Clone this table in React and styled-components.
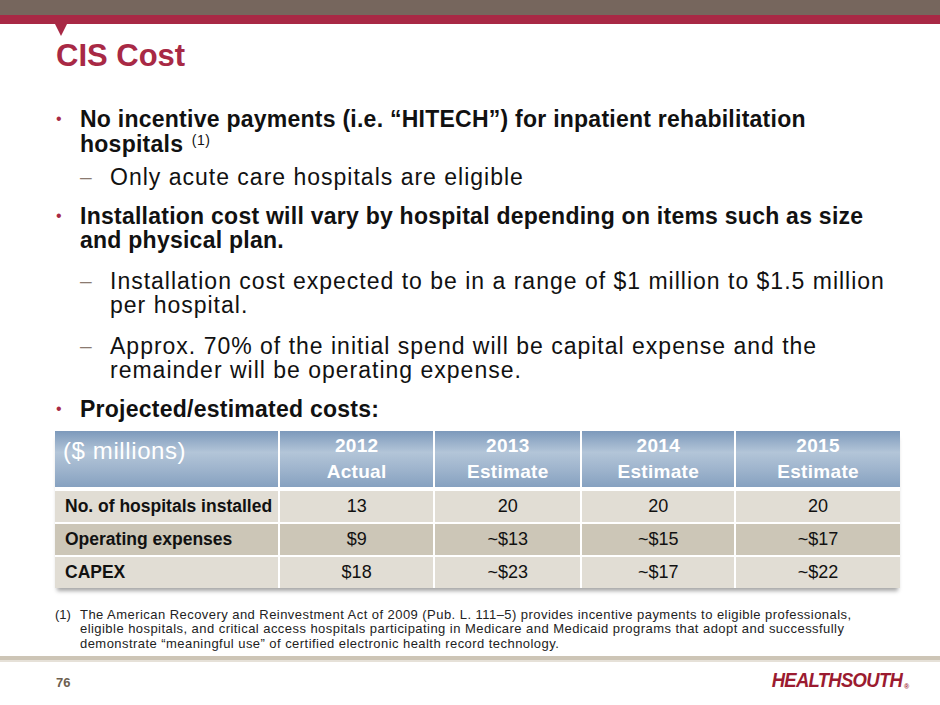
import React from 'react';
import styled, { createGlobalStyle } from 'styled-components';

const GlobalStyle = createGlobalStyle`
  html, body { margin: 0; padding: 0; background: #fff; }
  body { font-family: "Liberation Sans", Arial, sans-serif; }
`;

const Slide = styled.div`
  position: relative;
  width: 940px;
  height: 705px;
  display: flex;
  flex-direction: column;
  overflow: hidden;
  background: #fff;
`;

const TopBand = styled.div`
  height: 15px;
  flex-shrink: 0;
  background: #76665d;
`;

const RedBand = styled.div`
  position: relative;
  height: 9px;
  flex-shrink: 0;
  background: #a82945;

  /* little pointer under the band */
  &::after {
    content: '';
    position: absolute;
    left: 55px;
    top: 9px;
    border-left: 6px solid transparent;
    border-right: 6px solid transparent;
    border-top: 12px solid #a82945;
  }
`;

const Title = styled.h1`
  margin: 12px 0 0 56px;
  font-size: 31px;
  line-height: 40px;
  font-weight: bold;
  color: #a82945;
`;

const List = styled.div`
  margin-top: 31px;
  display: flex;
  flex-direction: column;
`;

const Item = styled.div`
  display: flex;
  margin-left: ${({ sub }) => (sub ? '80px' : '56px')};
  margin-top: ${({ gap }) => gap || 0}px;
  font-size: 23px;
  line-height: 24.5px;
  font-weight: ${({ sub }) => (sub ? 'normal' : 'bold')};
  letter-spacing: ${({ sub }) => (sub ? '1px' : '0.25px')};
  color: #111;
  white-space: nowrap;
`;

const Marker = styled.span`
  flex-shrink: 0;
  width: ${({ sub }) => (sub ? '30px' : '24px')};
  color: ${({ sub }) => (sub ? '#8a7a70' : '#a82945')};
  font-weight: normal;
  letter-spacing: 0;
  font-size: ${({ sub }) => (sub ? '21px' : '16px')};
`;

const Sup = styled.sup`
  margin-left: 2px;
  font-size: 14px;
  font-weight: normal;
  letter-spacing: 0.5px;
  vertical-align: 7px;
  line-height: 0;
`;

const Table = styled.table`
  margin: 10px 0 0 55px;
  width: 845px;
  border-collapse: collapse;
  box-shadow: 0 5px 4px -2px rgba(0, 0, 0, 0.35);
`;

const Head = styled.th`
  width: ${({ w }) => w}px;
  height: 56px;
  padding: 0 8px;
  border-right: 2px solid #fff;
  border-bottom: 4px solid #fff;
  background: linear-gradient(180deg, #7c99bb 0%, #b3c5d8 38%, #9db3cc 70%, #86a1c0 100%);
  color: #fff;
  text-align: ${({ left }) => (left ? 'left' : 'center')};
  vertical-align: ${({ left }) => (left ? 'top' : 'middle')};
  font-size: ${({ left }) => (left ? '24px' : '19px')};
  font-weight: ${({ left }) => (left ? 'normal' : 'bold')};
  letter-spacing: ${({ left }) => (left ? '0.6px' : '0.3px')};
  line-height: ${({ left }) => (left ? '40px' : '26px')};

  &:last-child { border-right: none; }
`;

const Cell = styled.td`
  height: 31px;
  padding: 0 0 0 ${({ label }) => (label ? '10px' : '0')};
  border-right: 2px solid #fff;
  border-bottom: 2px solid #fff;
  background: ${({ dark }) => (dark ? '#ccc6b7' : '#e1ddd4')};
  color: #111;
  text-align: ${({ label }) => (label ? 'left' : 'center')};
  font-size: ${({ label }) => (label ? '17.5px' : '18px')};
  font-weight: ${({ label }) => (label ? 'bold' : 'normal')};

  &:last-child { border-right: none; }
  tr:last-child > & { border-bottom: none; }
`;

const Footnote = styled.div`
  display: flex;
  margin: 20px 0 0 55px;
  font-size: 13px;
  line-height: 14.3px;
  letter-spacing: 0.45px;
  color: #222;
  white-space: nowrap;
`;

const NoteMark = styled.span`
  width: 25px;
  flex-shrink: 0;
  letter-spacing: 0;
`;

const Rule = styled.div`
  margin-top: 5px;
  height: 4px;
  flex-shrink: 0;
  background: #cdc5b6;
  border-bottom: 2px solid #e6e1d8;
`;

const Footer = styled.div`
  display: flex;
  align-items: flex-start;
  justify-content: space-between;
  padding: 4px 32px 0 56px;
`;

const PageNo = styled.span`
  margin-top: 9px;
  font-size: 13px;
  line-height: 15px;
  font-weight: bold;
  color: #6e5f50;
`;

const Logo = styled.span`
  display: inline-block;
  margin-top: 2px;
  font-size: 21px;
  line-height: 24px;
  font-weight: 900;
  font-style: italic;
  letter-spacing: -0.8px;
  color: #9b1b30;
  transform: scaleX(0.88);
  transform-origin: right center;
`;

const Reg = styled.span`
  font-size: 8px;
  font-style: normal;
  vertical-align: -2px;
  margin-left: 2px;
`;

const rows = [
  { label: 'No. of hospitals installed', values: ['13', '20', '20', '20'] },
  { label: 'Operating expenses', values: ['$9', '~$13', '~$15', '~$17'], dark: true },
  { label: 'CAPEX', values: ['$18', '~$23', '~$17', '~$22'] },
];

const heads = [
  { top: '2012', bottom: 'Actual', w: 156 },
  { top: '2013', bottom: 'Estimate', w: 141 },
  { top: '2014', bottom: 'Estimate', w: 149 },
  { top: '2015', bottom: 'Estimate', w: 164 },
];

const Bullet = ({ children, gap }) => (
  <Item gap={gap}>
    <Marker>•</Marker>
    <span>{children}</span>
  </Item>
);

const Dash = ({ children, gap }) => (
  <Item sub gap={gap}>
    <Marker sub>–</Marker>
    <span>{children}</span>
  </Item>
);

export default function App() {
  return (
    <Slide>
      <GlobalStyle />
      <TopBand />
      <RedBand />
      <Title>CIS Cost</Title>

      <List>
        <Bullet>
          No incentive payments (i.e. “HITECH”) for inpatient rehabilitation
          <br />
          hospitals <Sup>(1)</Sup>
        </Bullet>
        <Dash gap={9}>Only acute care hospitals are eligible</Dash>
        <Bullet gap={14}>
          Installation cost will vary by hospital depending on items such as size
          <br />
          and physical plan.
        </Bullet>
        <Dash gap={16}>
          Installation cost expected to be in a range of $1 million to $1.5 million
          <br />
          per hospital.
        </Dash>
        <Dash gap={16}>
          Approx. 70% of the initial spend will be capital expense and the
          <br />
          remainder will be operating expense.
        </Dash>
        <Bullet gap={14}>Projected/estimated costs:</Bullet>
      </List>

      <Table>
        <thead>
          <tr>
            <Head left w={235}>($ millions)</Head>
            {heads.map((h) => (
              <Head key={h.top} w={h.w}>
                {h.top}
                <br />
                {h.bottom}
              </Head>
            ))}
          </tr>
        </thead>
        <tbody>
          {rows.map((r) => (
            <tr key={r.label}>
              <Cell label dark={r.dark}>{r.label}</Cell>
              {r.values.map((v, i) => (
                <Cell key={i} dark={r.dark}>{v}</Cell>
              ))}
            </tr>
          ))}
        </tbody>
      </Table>

      <Footnote>
        <NoteMark>(1)</NoteMark>
        <span>
          The American Recovery and Reinvestment Act of 2009 (Pub. L. 111–5) provides incentive payments to eligible professionals,
          <br />
          eligible hospitals, and critical access hospitals participating in Medicare and Medicaid programs that adopt and successfully
          <br />
          demonstrate “meaningful use” of certified electronic health record technology.
        </span>
      </Footnote>

      <Rule />
      <Footer>
        <PageNo>76</PageNo>
        <Logo>
          HEALTHSOUTH<Reg>®</Reg>
        </Logo>
      </Footer>
    </Slide>
  );
}
